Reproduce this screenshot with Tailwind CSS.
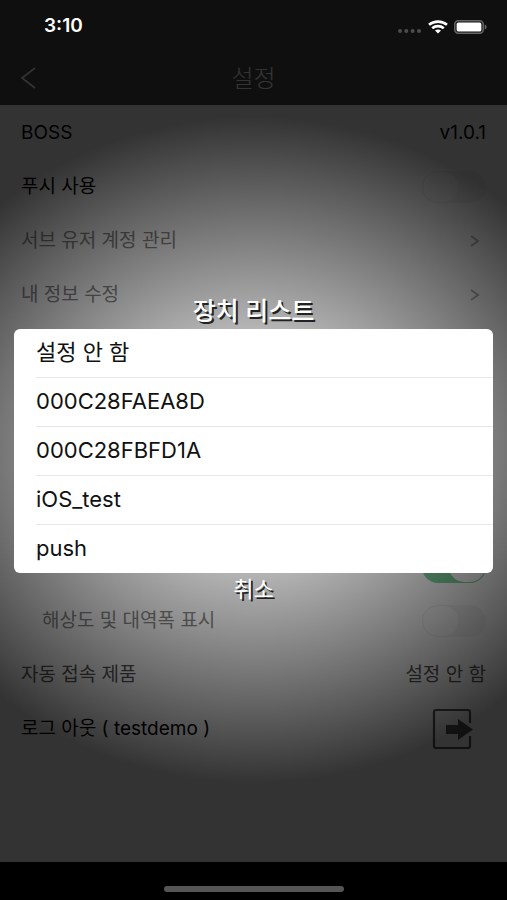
<!DOCTYPE html>
<html lang="ko">
<head>
<meta charset="utf-8">
<meta name="viewport" content="width=device-width, initial-scale=1">
<title>설정</title>
<script src="https://cdn.jsdelivr.net/npm/@tailwindcss/browser@4"></script>
</head>
<body class="relative flex min-h-screen flex-col bg-white font-['Inter','Noto_Sans_CJK_KR',sans-serif] text-[19px] text-black">

<header class="bg-[#4b4b4b]">
  <div class="relative z-20 flex h-[53px] items-center justify-between pr-5 pl-11 text-white">
    <span class="font-semibold">3:10</span>
    <span class="flex items-center gap-[6px]">
      <svg class="h-3 w-6" viewBox="0 0 24 12" fill="#4c4c4c" aria-hidden="true"><circle cx="2" cy="10" r="2"/><circle cx="8.3" cy="10" r="2"/><circle cx="14.600" cy="10" r="2"/><circle cx="21" cy="10" r="2"/></svg>
      <svg class="h-[14px] w-5" viewBox="0 0 20 14" fill="none" stroke="#fff" stroke-width="2.6" aria-hidden="true"><path d="M1 4.8C6 .5 14 .5 19 4.8"/><path d="M4.2 8.2c3.3-2.8 8.3-2.8 11.6 0"/><path d="M7 10.600c1.8-1.4 4.2-1.4 6 0L10 13.400z" fill="#fff" stroke="none"/></svg>
      <svg class="h-[14px] w-[33px]" viewBox="0 0 33 14" aria-hidden="true"><rect x=".8" y=".8" width="28.400" height="12.400" rx="3.5" fill="none" stroke="#666" stroke-width="1.5"/><rect x="2.6" y="2.4" width="24.800" height="9.2" rx="1.6" fill="#fff"/><path d="M30.700 4.600c2.6.8 2.6 4 0 4.800z" fill="#666"/></svg>
    </span>
  </div>
  <div class="grid h-[52px] grid-cols-[1fr_auto_1fr] items-center px-5 text-white">
    <button type="button" aria-label="뒤로" class="w-4">
      <svg class="h-6 w-4" viewBox="0 0 16 24" fill="none" stroke="currentColor" stroke-width="1.6"><path d="M15 1 2 11l13 10"/></svg>
    </button>
    <h1 class="text-2xl leading-7 font-light">설정</h1>
  </div>
</header>

<main class="flex-1 pt-px">
  <section>
    <div class="flex h-[54px] items-center justify-between px-[21px]"><span>BOSS</span><span>v1.0.1</span></div>
    <div class="flex h-[54px] items-center justify-between px-[21px]">
      <label for="push">푸시 사용</label>
      <input id="push" type="checkbox" class="relative h-8 w-16 appearance-none rounded-full bg-[#f5f5f5] before:absolute before:inset-y-0 before:left-0 before:w-[38px] before:rounded-full before:border before:border-[#f0f0f0] before:bg-white">
    </div>
    <a href="#sub" class="flex h-[54px] items-center justify-between px-[21px] text-[#888]">서브 유저 계정 관리
      <svg class="mr-1 h-4 w-4" viewBox="0 0 16 16" fill="none" stroke="#b5b5b5" stroke-width="2" aria-hidden="true"><path d="m5 3 7 5-7 5"/></svg></a>
    <a href="#me" class="flex h-[54px] items-center justify-between px-[21px] text-[#888]">내 정보 수정
      <svg class="mr-1 h-4 w-4" viewBox="0 0 16 16" fill="none" stroke="#b5b5b5" stroke-width="2" aria-hidden="true"><path d="m5 3 7 5-7 5"/></svg></a>
  </section>
  <section class="pt-[218px]">
    <div class="flex h-[54px] items-center justify-end px-[21px]">
      <input type="checkbox" checked aria-label="표시" class="relative h-8 w-16 appearance-none rounded-full bg-[#7fd6a0] before:absolute before:inset-y-px before:right-px before:w-9 before:rounded-full before:bg-white">
    </div>
    <div class="flex h-[54px] items-center justify-between pr-[21px] pl-[42px] text-[#888]">
      <label for="res">해상도 및 대역폭 표시</label>
      <input id="res" type="checkbox" class="relative h-8 w-16 appearance-none rounded-full bg-[#f5f5f5] before:absolute before:inset-y-0 before:left-0 before:w-[38px] before:rounded-full before:border before:border-[#f0f0f0] before:bg-white">
    </div>
    <div class="flex h-[54px] items-center justify-between px-[21px] text-[#555]"><span>자동 접속 제품</span><span>설정 안 함</span></div>
    <div class="flex h-[54px] items-center justify-between px-[21px]">
      <span>로그 아웃 ( testdemo )</span>
      <button type="button" aria-label="로그 아웃" class="mr-3">
        <svg class="h-[42px] w-[42px]" viewBox="0 0 42 42"><path d="M38 15V4q0-2-2-2H4Q2 2 2 4v34q0 2 2 2h32q2 0 2-2V28" fill="none" stroke="#555" stroke-width="2.2"/><path d="M14 17h12v-6l15 10.500L26 32v-6H14z" fill="#555"/></svg>
      </button>
    </div>
  </section>
</main>

<footer class="flex h-[38px] justify-center bg-black pt-6">
  <div class="relative z-20 h-[6px] w-[180px] rounded-full bg-[#555]"></div>
</footer>

<div class="absolute inset-0 z-10 flex flex-col justify-center bg-[radial-gradient(74%_37%_at_center,rgb(0_0_0/0),rgb(0_0_0/.8))] px-[14px]">
  <div role="dialog" aria-labelledby="devices" class="flex flex-col pt-px">
    <h2 id="devices" class="h-9 text-center text-[25px] leading-9 font-medium text-white text-shadow-[2px_2px_0_#222]">장치 리스트</h2>
    <ul class="overflow-hidden rounded-md bg-white pl-[22px] text-[22px] text-[#111]">
      <li class="border-b border-[#e8e8e8]"><button type="button" class="h-12 w-full text-left">설정 안 함</button></li>
      <li class="border-b border-[#e8e8e8]"><button type="button" class="h-12 w-full text-left">000C28FAEA8D</button></li>
      <li class="border-b border-[#e8e8e8]"><button type="button" class="h-12 w-full text-left">000C28FBFD1A</button></li>
      <li class="border-b border-[#e8e8e8]"><button type="button" class="h-12 w-full text-left">iOS_test</button></li>
      <li><button type="button" class="h-12 w-full text-left">push</button></li>
    </ul>
    <div class="flex h-9 items-start justify-center"><button type="button" class="text-[22px] leading-8 text-white text-shadow-[2px_2px_0_#222]">취소</button></div>
  </div>
</div>
</body>
</html>
